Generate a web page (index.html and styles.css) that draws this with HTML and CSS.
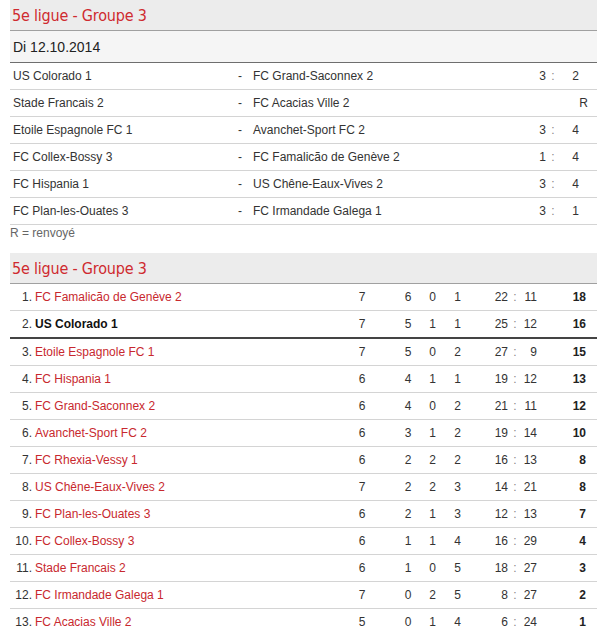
FILE: index.html
```html
<!DOCTYPE html>
<html lang="fr">
<head>
<meta charset="utf-8">
<title>5e ligue - Groupe 3</title>
<link rel="stylesheet" href="styles.css">
</head>
<body>
<div class="page">
  <h2 class="group-title">5e ligue - Groupe 3</h2>
  <div class="match-date">Di 12.10.2014</div>
  <table class="matches">
    <colgroup>
      <col class="c-home"><col class="c-dash"><col class="c-away"><col class="c-hg"><col class="c-colon"><col class="c-ag"><col class="c-end">
    </colgroup>
    <tbody>
      <tr><td class="home">US Colorado 1</td><td class="dash">-</td><td class="away">FC Grand-Saconnex 2</td><td class="hg">3</td><td class="colon">:</td><td class="ag">2</td><td></td></tr>
      <tr><td class="home">Stade Francais 2</td><td class="dash">-</td><td class="away">FC Acacias Ville 2</td><td class="status" colspan="4">R</td></tr>
      <tr><td class="home">Etoile Espagnole FC 1</td><td class="dash">-</td><td class="away">Avanchet-Sport FC 2</td><td class="hg">3</td><td class="colon">:</td><td class="ag">4</td><td></td></tr>
      <tr><td class="home">FC Collex-Bossy 3</td><td class="dash">-</td><td class="away">FC Famalicão de Genève 2</td><td class="hg">1</td><td class="colon">:</td><td class="ag">4</td><td></td></tr>
      <tr><td class="home">FC Hispania 1</td><td class="dash">-</td><td class="away">US Chêne-Eaux-Vives 2</td><td class="hg">3</td><td class="colon">:</td><td class="ag">4</td><td></td></tr>
      <tr><td class="home">FC Plan-les-Ouates 3</td><td class="dash">-</td><td class="away">FC Irmandade Galega 1</td><td class="hg">3</td><td class="colon">:</td><td class="ag">1</td><td></td></tr>
    </tbody>
  </table>
  <p class="legend">R = renvoyé</p>

  <h2 class="group-title">5e ligue - Groupe 3</h2>
  <table class="standings">
    <colgroup>
      <col class="s-rank"><col class="s-team"><col class="s-sp"><col class="s-w"><col class="s-d"><col class="s-l"><col class="s-gf"><col class="s-colon"><col class="s-ga"><col class="s-pts"><col class="s-end">
    </colgroup>
    <tbody>
      <tr><td class="rank">1.</td><td class="team"><a href="#">FC Famalicão de Genève 2</a></td><td class="sp">7</td><td class="n">6</td><td class="n">0</td><td class="n">1</td><td class="gf">22</td><td class="colon">:</td><td class="ga">11</td><td class="pts">18</td><td></td></tr>
      <tr class="own promo-line"><td class="rank">2.</td><td class="team"><strong>US Colorado 1</strong></td><td class="sp">7</td><td class="n">5</td><td class="n">1</td><td class="n">1</td><td class="gf">25</td><td class="colon">:</td><td class="ga">12</td><td class="pts">16</td><td></td></tr>
      <tr><td class="rank">3.</td><td class="team"><a href="#">Etoile Espagnole FC 1</a></td><td class="sp">7</td><td class="n">5</td><td class="n">0</td><td class="n">2</td><td class="gf">27</td><td class="colon">:</td><td class="ga">9</td><td class="pts">15</td><td></td></tr>
      <tr><td class="rank">4.</td><td class="team"><a href="#">FC Hispania 1</a></td><td class="sp">6</td><td class="n">4</td><td class="n">1</td><td class="n">1</td><td class="gf">19</td><td class="colon">:</td><td class="ga">12</td><td class="pts">13</td><td></td></tr>
      <tr><td class="rank">5.</td><td class="team"><a href="#">FC Grand-Saconnex 2</a></td><td class="sp">6</td><td class="n">4</td><td class="n">0</td><td class="n">2</td><td class="gf">21</td><td class="colon">:</td><td class="ga">11</td><td class="pts">12</td><td></td></tr>
      <tr><td class="rank">6.</td><td class="team"><a href="#">Avanchet-Sport FC 2</a></td><td class="sp">6</td><td class="n">3</td><td class="n">1</td><td class="n">2</td><td class="gf">19</td><td class="colon">:</td><td class="ga">14</td><td class="pts">10</td><td></td></tr>
      <tr><td class="rank">7.</td><td class="team"><a href="#">FC Rhexia-Vessy 1</a></td><td class="sp">6</td><td class="n">2</td><td class="n">2</td><td class="n">2</td><td class="gf">16</td><td class="colon">:</td><td class="ga">13</td><td class="pts">8</td><td></td></tr>
      <tr><td class="rank">8.</td><td class="team"><a href="#">US Chêne-Eaux-Vives 2</a></td><td class="sp">7</td><td class="n">2</td><td class="n">2</td><td class="n">3</td><td class="gf">14</td><td class="colon">:</td><td class="ga">21</td><td class="pts">8</td><td></td></tr>
      <tr><td class="rank">9.</td><td class="team"><a href="#">FC Plan-les-Ouates 3</a></td><td class="sp">6</td><td class="n">2</td><td class="n">1</td><td class="n">3</td><td class="gf">12</td><td class="colon">:</td><td class="ga">13</td><td class="pts">7</td><td></td></tr>
      <tr><td class="rank">10.</td><td class="team"><a href="#">FC Collex-Bossy 3</a></td><td class="sp">6</td><td class="n">1</td><td class="n">1</td><td class="n">4</td><td class="gf">16</td><td class="colon">:</td><td class="ga">29</td><td class="pts">4</td><td></td></tr>
      <tr><td class="rank">11.</td><td class="team"><a href="#">Stade Francais 2</a></td><td class="sp">6</td><td class="n">1</td><td class="n">0</td><td class="n">5</td><td class="gf">18</td><td class="colon">:</td><td class="ga">27</td><td class="pts">3</td><td></td></tr>
      <tr><td class="rank">12.</td><td class="team"><a href="#">FC Irmandade Galega 1</a></td><td class="sp">7</td><td class="n">0</td><td class="n">2</td><td class="n">5</td><td class="gf">8</td><td class="colon">:</td><td class="ga">27</td><td class="pts">2</td><td></td></tr>
      <tr><td class="rank">13.</td><td class="team"><a href="#">FC Acacias Ville 2</a></td><td class="sp">5</td><td class="n">0</td><td class="n">1</td><td class="n">4</td><td class="gf">6</td><td class="colon">:</td><td class="ga">24</td><td class="pts">1</td><td></td></tr>
    </tbody>
  </table>
</div>
</body>
</html>
```

FILE: styles.css
```css
html, body {
  margin: 0;
  padding: 0;
  background: #fff;
}

body {
  padding-left: 10px;
  font-family: "Liberation Sans", Arial, sans-serif;
  font-size: 12px;
  color: #333;
}

.page {
  width: 587px;
}

.group-title {
  margin: 0;
  height: 30px;
  line-height: 31px;
  padding-left: 2px;
  background: #ececec;
  border-bottom: 1px solid #a0a0a0;
  font-family: "DejaVu Sans Condensed", "DejaVu Sans", sans-serif;
  font-stretch: condensed;
  font-weight: normal;
  font-size: 16px;
  letter-spacing: -0.2px;
  color: #cf2a2f;
}

.match-date {
  height: 31px;
  line-height: 32px;
  padding-left: 3px;
  background: #f5f5f5;
  border-bottom: 1px solid #6e6e6e;
  font-size: 14px;
  color: #222;
}

table {
  width: 587px;
  border-collapse: collapse;
  table-layout: fixed;
}

td {
  padding: 0;
  height: 26px;
  white-space: nowrap;
}

.matches tr {
  border-bottom: 1px solid #d4d4d4;
}

.c-home { width: 226px; }
.c-dash { width: 8px; }
.c-away { width: 286px; }
.c-hg { width: 16px; }
.c-colon { width: 14px; }
.c-ag { width: 19px; }
.c-end { width: 18px; }

.matches .home { padding-left: 3px; }
.matches .dash { text-align: center; }
.matches .away { padding-left: 9px; }
.matches .hg, .matches .ag { text-align: right; }
.colon { text-align: center; color: #888; }
.matches .status { text-align: right; padding-right: 9px; }

.legend {
  margin: 0 0 12px;
  height: 16px;
  line-height: 16px;
  font-size: 12px;
  color: #666;
}

.s-rank { width: 22px; }
.s-team { width: 318px; }
.s-sp { width: 46px; }
.s-w { width: 24px; }
.s-d { width: 25px; }
.s-l { width: 25px; }
.s-gf { width: 38px; }
.s-colon { width: 14px; }
.s-ga { width: 15px; }
.s-pts { width: 49px; }
.s-end { width: 11px; }

.standings tr {
  border-bottom: 1px solid #d4d4d4;
}

.standings tr.promo-line {
  border-bottom: 2px solid #444;
}

.standings .rank {
  text-align: right;
  color: #333;
}

.standings .team {
  padding-left: 3px;
}

.standings .team a {
  color: #c8282e;
  text-decoration: none;
}

.standings .team strong {
  color: #111;
}

.standings .sp {
  text-align: center;
  padding-right: 22px;
}

.standings .n { text-align: center; }
.standings .gf, .standings .ga { text-align: right; }

.standings .pts {
  text-align: right;
  font-weight: bold;
  color: #222;
}
```
